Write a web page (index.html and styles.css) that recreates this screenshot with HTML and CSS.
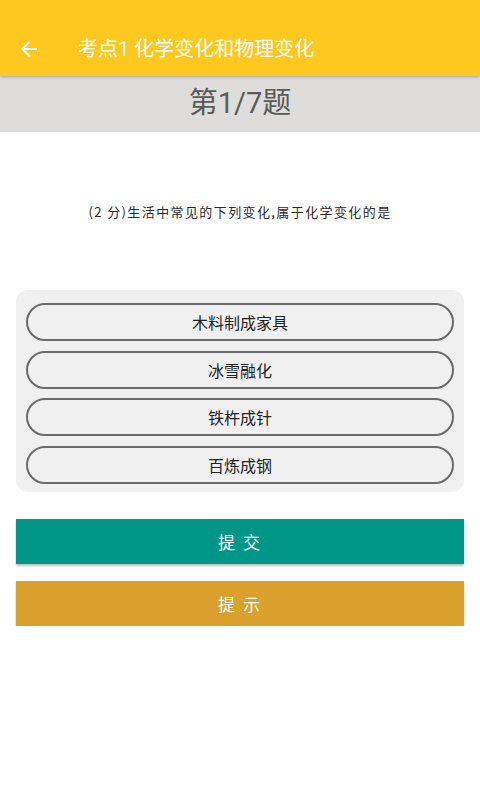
FILE: index.html
```html
<!DOCTYPE html>
<html lang="zh">
<head>
<meta charset="utf-8">
<title>考点1 化学变化和物理变化</title>
<link rel="stylesheet" href="styles.css">
</head>
<body>
<header class="appbar">
  <div class="toolbar">
    <span class="back">
      <svg viewBox="0 0 24 24" width="24" height="24"><path d="M20 11H7.83l5.59-5.59L12 4l-8 8 8 8 1.41-1.41L7.83 13H20v-2z" fill="#fff"/></svg>
    </span>
    <h1 class="title">考点1 化学变化和物理变化</h1>
  </div>
</header>
<div class="progress">第1/7题</div>
<section class="question">
  <p class="qtext">(2 分)生活中常见的下列变化,属于化学变化的是</p>
</section>
<div class="options">
  <div class="option">木料制成家具</div>
  <div class="option">冰雪融化</div>
  <div class="option">铁杵成针</div>
  <div class="option">百炼成钢</div>
</div>
<div class="btn btn-submit">提 交</div>
<div class="btn btn-hint">提 示</div>
</body>
</html>
```
FILE: styles.css
```css
html, body {
  margin: 0;
  padding: 0;
  background: #ffffff;
  font-family: Roboto, "Noto Sans CJK SC", sans-serif;
}
.appbar {
  background: #ffc81f;
  height: 76px;
  box-sizing: border-box;
  padding-top: 22px;
  position: relative;
  z-index: 2;
  box-shadow: 0 1px 3px rgba(0,0,0,0.25);
}
.toolbar {
  height: 54px;
  display: flex;
  align-items: center;
}
.back {
  width: 24px;
  height: 24px;
  margin-left: 17px;
  display: flex;
}
.title {
  margin: 0 0 0 37px;
  font-size: 20px;
  font-weight: normal;
  color: #ffffff;
  line-height: 1;
}
.progress {
  height: 56px;
  background: #dedddc;
  display: flex;
  align-items: center;
  justify-content: center;
  font-size: 29px;
  color: #5a5a5a;
  line-height: 1;
  padding-bottom: 2px;
  box-sizing: border-box;
}
.question {
  height: 158px;
  display: flex;
  align-items: center;
  justify-content: center;
}
.qtext {
  margin: 0;
  font-family: "Noto Sans CJK SC", sans-serif;
  font-size: 13px;
  letter-spacing: 1.4px;
  color: #2a2a2a;
  line-height: 1;
}
.options {
  margin: 0 16px;
  background: #f0f0f0;
  border-radius: 12px;
  padding: 13px 10px 8px;
  display: flex;
  flex-direction: column;
  gap: 9.5px;
}
.option {
  height: 38px;
  box-sizing: border-box;
  border: 2px solid #6a6a6a;
  border-radius: 19px;
  display: flex;
  align-items: center;
  justify-content: center;
  font-size: 16px;
  color: #222222;
}
.btn {
  margin: 0 16px;
  height: 45px;
  display: flex;
  align-items: center;
  justify-content: center;
  color: #ffffff;
  font-size: 17px;
  letter-spacing: 2px;
  box-shadow: 0 2px 2px rgba(0,0,0,0.25);
}
.btn-submit {
  margin-top: 27px;
  background: #009688;
}
.btn-hint {
  margin-top: 17px;
  background: #d9a02c;
}
```
